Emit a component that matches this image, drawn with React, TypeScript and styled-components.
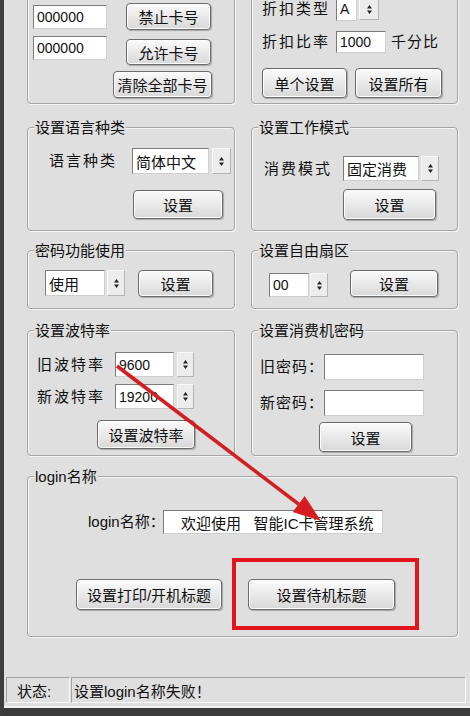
import React from "react";
import styled, { createGlobalStyle } from "styled-components";

const BG = "#dfdfdf";

const GlobalStyle = createGlobalStyle`
    html, body {
        margin: 0;
        padding: 0;
        background: ${BG};
    }
`;

const Window = styled.div`
    position: relative;
    display: flex;
    flex-direction: column;
    box-sizing: border-box;
    width: 470px;
    height: 716px;
    overflow: hidden;
    border-left: 4px solid #3e3e3e;
    background: ${BG};
    color: #111;
    font-family: "Liberation Sans", "Noto Sans CJK SC", sans-serif;
`;

const Content = styled.div`
    display: flex;
    flex-direction: column;
    padding-left: 23px;
    width: 431px;
`;

const Row = styled.div<{ $mt: number }>`
    display: grid;
    grid-template-columns: 208px 207px;
    column-gap: 16px;
    margin-top: ${(p) => p.$mt}px;
`;

const Group = styled.div<{ $h: number; $mt?: number }>`
    display: flex;
    flex-direction: column;
    align-items: flex-start;
    box-sizing: border-box;
    height: ${(p) => p.$h}px;
    margin-top: ${(p) => p.$mt ?? 0}px;
    border: 1px solid #a4a4a4;
    border-radius: 4px;
    box-shadow: 1px 1px 0 #f6f6f6, inset 1px 1px 0 #f6f6f6;
`;

const Legend = styled.div`
    margin: -8px 0 0 6px;
    padding: 0 1px;
    height: 16px;
    line-height: 16px;
    font-size: 15px;
    white-space: nowrap;
    background: ${BG};
`;

const Line = styled.div<{ $mt?: number; $ml?: number; $top?: boolean }>`
    display: flex;
    align-items: ${(p) => (p.$top ? "flex-start" : "center")};
    margin-top: ${(p) => p.$mt ?? 0}px;
    margin-left: ${(p) => p.$ml ?? 0}px;
`;

const Label = styled.span<{ $w?: number; $ls?: number; $ml?: number }>`
    flex: none;
    width: ${(p) => (p.$w ? `${p.$w}px` : "auto")};
    margin-left: ${(p) => p.$ml ?? 0}px;
    font-size: 15px;
    line-height: 18px;
    letter-spacing: ${(p) => p.$ls ?? 0}px;
    white-space: nowrap;
`;

const Field = styled.div<{ $w: number; $h: number; $mt?: number; $ml?: number; $cjk?: boolean; $pl?: number }>`
    display: flex;
    align-items: center;
    flex: none;
    box-sizing: border-box;
    width: ${(p) => p.$w}px;
    height: ${(p) => p.$h}px;
    margin-top: ${(p) => p.$mt ?? 0}px;
    margin-left: ${(p) => p.$ml ?? 0}px;
    padding-left: ${(p) => p.$pl ?? 3}px;
    border: 1px solid;
    border-color: #7c7c7c #cfcfcf #cfcfcf #7c7c7c;
    background: #fff;
    font-size: ${(p) => (p.$cjk ? 15 : 14)}px;
    white-space: nowrap;
    overflow: hidden;
`;

const SpinBox = styled.div<{ $w: number; $h: number; $mt?: number; $ml?: number }>`
    display: flex;
    align-items: center;
    justify-content: center;
    flex: none;
    box-sizing: border-box;
    width: ${(p) => p.$w}px;
    height: ${(p) => p.$h}px;
    margin-top: ${(p) => p.$mt ?? 0}px;
    margin-left: ${(p) => p.$ml ?? 0}px;
    border: 1px solid;
    border-color: #f8f8f8 #b4b4b4 #b4b4b4 #f8f8f8;
    background: #ececec;
`;

const Button = styled.button<{ $w: number; $h: number; $mt?: number; $ml?: number }>`
    flex: none;
    box-sizing: border-box;
    width: ${(p) => p.$w}px;
    height: ${(p) => p.$h}px;
    margin: ${(p) => p.$mt ?? 0}px 0 0 ${(p) => p.$ml ?? 0}px;
    padding: 0;
    border: 1px solid #6c6c6c;
    border-radius: 4px;
    background: linear-gradient(#fbfbfb, #ebebeb 45%, #d8d8d8);
    box-shadow: inset 0 0 0 1px #fdfdfd, 1px 1px 1px rgba(0, 0, 0, 0.25);
    color: #111;
    font-family: "Liberation Sans", "Noto Sans CJK SC", sans-serif;
    font-size: 15px;
    white-space: nowrap;
`;

const Highlight = styled.div`
    display: flex;
    align-items: center;
    box-sizing: border-box;
    width: 187px;
    height: 72px;
    margin-left: 10px;
    padding-left: 12px;
    border: 4px solid #e2141c;
`;

const StatusBar = styled.div`
    display: flex;
    width: 461px;
    height: 26px;
    margin: 40px 0 0 2px;
`;

const StatusCell = styled.div<{ $w?: number; $pl: number }>`
    display: flex;
    align-items: center;
    box-sizing: border-box;
    flex: ${(p) => (p.$w ? "none" : "1")};
    width: ${(p) => (p.$w ? `${p.$w}px` : "auto")};
    height: 100%;
    margin-right: 1px;
    padding-left: ${(p) => p.$pl}px;
    border: 1px solid;
    border-color: #a2a2a2 #f8f8f8 #f8f8f8 #a2a2a2;
    font-size: 15px;
    white-space: nowrap;
`;

const Footer = styled.div`
    margin-top: auto;
    height: 8px;
    border-top: 2px solid #f2f2f2;
    background: #3b3b3b;
`;

const Overlay = styled.svg`
    position: absolute;
    top: 0;
    left: -4px;
    pointer-events: none;
`;

function Spin({ w, h, mt, ml }: { w: number; h: number; mt?: number; ml?: number }) {
    return (
        <SpinBox $w={w} $h={h} $mt={mt} $ml={ml}>
            <svg width="5" height="9" viewBox="0 0 5 9">
                <polygon points="2.5,0 5,3.5 0,3.5" fill="#222" />
                <polygon points="0,5.5 5,5.5 2.5,9" fill="#222" />
            </svg>
        </SpinBox>
    );
}

function Arrow() {
    const tip = [321, 521];
    const from = [117, 366];
    const dx = tip[0] - from[0];
    const dy = tip[1] - from[1];
    const len = Math.hypot(dx, dy);
    const ux = dx / len;
    const uy = dy / len;
    const bx = tip[0] - ux * 28;
    const by = tip[1] - uy * 28;
    const w1 = [bx - uy * 10, by + ux * 10];
    const w2 = [bx + uy * 10, by - ux * 10];
    const head = `${tip[0]},${tip[1]} ${w1[0]},${w1[1]} ${w2[0]},${w2[1]}`;
    return (
        <Overlay width="470" height="716" viewBox="0 0 470 716">
            <line x1={from[0] + 1} y1={from[1] + 1.5} x2={bx + 1} y2={by + 1.5} stroke="rgba(0,0,0,0.22)" strokeWidth="3" />
            <line x1={from[0]} y1={from[1]} x2={bx} y2={by} stroke="#d71c1f" strokeWidth="3.5" />
            <polygon points={head} fill="#d71c1f" />
        </Overlay>
    );
}

function App() {
    return (
        <>
            <GlobalStyle />
            <Window>
                <Content>
                    <Row $mt={-20}>
                        <Group $h={124}>
                            <Line $mt={22}>
                                <Field $w={74} $h={24} $ml={5}>000000</Field>
                                <Button $w={85} $h={27} $ml={19}>禁止卡号</Button>
                            </Line>
                            <Line $mt={6} $top>
                                <Field $w={74} $h={24} $ml={5}>000000</Field>
                                <Button $w={85} $h={26} $ml={19} $mt={3}>允许卡号</Button>
                            </Line>
                            <Button $w={99} $h={27} $ml={85} $mt={6}>清除全部卡号</Button>
                        </Group>
                        <Group $h={124}>
                            <Line $mt={16} $ml={10}>
                                <Label $w={74} $ls={2}>折扣类型</Label>
                                <Field $w={21} $h={24}>A</Field>
                                <Spin w={20} h={22} ml={2} />
                            </Line>
                            <Line $mt={10} $ml={10}>
                                <Label $w={74} $ls={2}>折扣比率</Label>
                                <Field $w={50} $h={22}>1000</Field>
                                <Label $ml={5} $ls={1}>千分比</Label>
                            </Line>
                            <Line $mt={15} $ml={10}>
                                <Button $w={85} $h={30}>单个设置</Button>
                                <Button $w={87} $h={30} $ml={8}>设置所有</Button>
                            </Line>
                        </Group>
                    </Row>

                    <Row $mt={23}>
                        <Group $h={104}>
                            <Legend>设置语言种类</Legend>
                            <Line $mt={12} $ml={21}>
                                <Label $w={83} $ls={2}>语言种类</Label>
                                <Field $w={77} $h={26} $cjk>简体中文</Field>
                                <Spin w={19} h={26} ml={3} />
                            </Line>
                            <Button $w={90} $h={29} $ml={105} $mt={16}>设置</Button>
                        </Group>
                        <Group $h={104}>
                            <Legend>设置工作模式</Legend>
                            <Line $mt={20} $ml={12}>
                                <Label $w={79} $ls={2}>消费模式</Label>
                                <Field $w={76} $h={25} $cjk>固定消费</Field>
                                <Spin w={18} h={25} ml={2} />
                            </Line>
                            <Button $w={93} $h={31} $ml={91} $mt={8}>设置</Button>
                        </Group>
                    </Row>

                    <Row $mt={19}>
                        <Group $h={59}>
                            <Legend>密码功能使用</Legend>
                            <Line $mt={11} $ml={17} $top>
                                <Field $w={60} $h={26} $cjk>使用</Field>
                                <Spin w={18} h={26} ml={2} />
                                <Button $w={75} $h={27} $ml={13}>设置</Button>
                            </Line>
                        </Group>
                        <Group $h={59}>
                            <Legend>设置自由扇区</Legend>
                            <Line $mt={11} $ml={17} $top>
                                <Field $w={40} $h={24} $mt={3}>00</Field>
                                <Spin w={18} h={24} mt={3} ml={1} />
                                <Button $w={88} $h={27} $ml={22}>设置</Button>
                            </Line>
                        </Group>
                    </Row>

                    <Row $mt={21}>
                        <Group $h={126}>
                            <Legend>设置波特率</Legend>
                            <Line $mt={13} $ml={9}>
                                <Label $w={78} $ls={2}>旧波特率</Label>
                                <Field $w={59} $h={25}>9600</Field>
                                <Spin w={17} h={25} ml={3} />
                            </Line>
                            <Line $mt={7} $ml={9}>
                                <Label $w={78} $ls={2}>新波特率</Label>
                                <Field $w={59} $h={25}>19200</Field>
                                <Spin w={17} h={25} ml={3} />
                            </Line>
                            <Button $w={98} $h={29} $ml={69} $mt={11}>设置波特率</Button>
                        </Group>
                        <Group $h={126}>
                            <Legend>设置消费机密码</Legend>
                            <Line $mt={15} $ml={8}>
                                <Label $w={64} $ls={1}>旧密码：</Label>
                                <Field $w={100} $h={26} />
                            </Line>
                            <Line $mt={10} $ml={8}>
                                <Label $w={64} $ls={1}>新密码：</Label>
                                <Field $w={100} $h={26} />
                            </Line>
                            <Button $w={93} $h={30} $ml={67} $mt={6}>设置</Button>
                        </Group>
                    </Row>

                    <Group $h={161} $mt={20}>
                        <Legend>login名称</Legend>
                        <Line $mt={25} $ml={60}>
                            <Label $w={75}>login名称：</Label>
                            <Field $w={220} $h={24} $cjk $pl={17}>
                                欢迎使用&nbsp;&nbsp;&nbsp;智能IC卡管理系统
                            </Field>
                        </Line>
                        <Line $mt={24} $ml={48}>
                            <Button $w={146} $h={31}>设置打印/开机标题</Button>
                            <Highlight>
                                <Button $w={147} $h={31}>设置待机标题</Button>
                            </Highlight>
                        </Line>
                    </Group>
                </Content>

                <StatusBar>
                    <StatusCell $w={64} $pl={10}>状态:</StatusCell>
                    <StatusCell $pl={2}>设置login名称失败！</StatusCell>
                </StatusBar>
                <Footer />
                <Arrow />
            </Window>
        </>
    );
}

export default App;
